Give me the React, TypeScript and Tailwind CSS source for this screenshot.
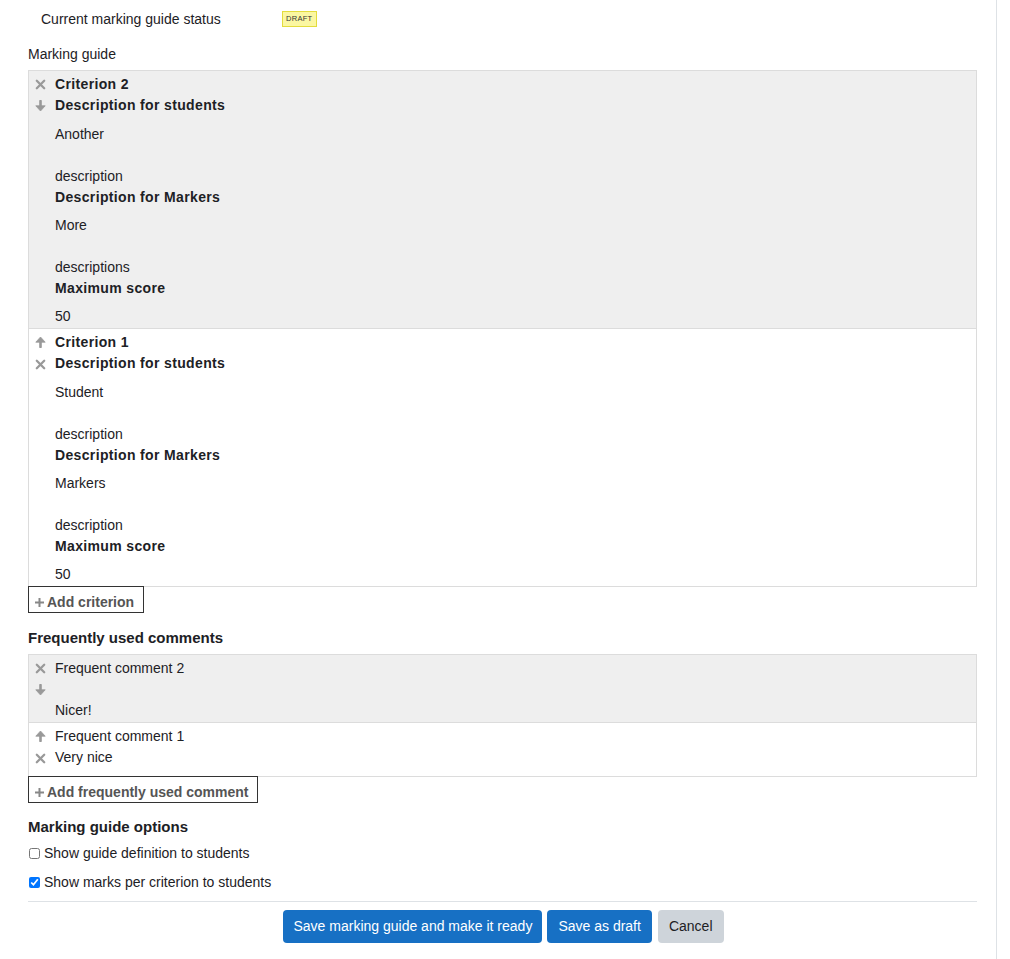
import React from 'react';

type Criterion = {
  title: string;
  students: string;
  markers: string;
  score: string;
  shaded: boolean;
  icons: ('x' | 'up' | 'down')[];
};

type Comment = {
  lines: string[];
  shaded: boolean;
  icons: ('x' | 'up' | 'down')[];
};

const criteria: Criterion[] = [
  { title: 'Criterion 2', students: 'Another\n\ndescription', markers: 'More\n\ndescriptions', score: '50', shaded: true, icons: ['x', 'down'] },
  { title: 'Criterion 1', students: 'Student\n\ndescription', markers: 'Markers\n\ndescription', score: '50', shaded: false, icons: ['up', 'x'] },
];

const comments: Comment[] = [
  { lines: ['Frequent comment 2', '', 'Nicer!'], shaded: true, icons: ['x', 'down'] },
  { lines: ['Frequent comment 1', 'Very nice'], shaded: false, icons: ['up', 'x'] },
];

function Icon({ kind }: { kind: 'x' | 'up' | 'down' }) {
  if (kind === 'x') {
    return (
      <svg width="11" height="11" viewBox="0 0 11 11">
        <path d="M1.8 1.8 L9.2 9.2 M9.2 1.8 L1.8 9.2" stroke="#999" strokeWidth="2.3" strokeLinecap="round" />
      </svg>
    );
  }
  const rot = kind === 'down' ? 'rotate(180 5.5 6)' : undefined;
  return (
    <svg width="11" height="12" viewBox="0 0 11 12">
      <g transform={rot}>
        <path d="M5.5 11 L5.5 4" stroke="#999" strokeWidth="2.6" strokeLinecap="round" />
        <path d="M0.8 6.2 L5.5 1 L10.2 6.2 Z" fill="#999" stroke="#999" strokeWidth="0.8" strokeLinejoin="round" />
      </g>
    </svg>
  );
}

function IconCol({ icons }: { icons: ('x' | 'up' | 'down')[] }) {
  return (
    <div className="w-[26px] shrink-0 flex flex-col items-start pl-[6px] -mt-[1px]">
      {icons.map((k, i) => (
        <div key={i} className="h-[22px] flex items-center">
          <Icon kind={k} />
        </div>
      ))}
    </div>
  );
}

function PlusButton({ label }: { label: string }) {
  return (
    <button className="flex items-center border border-[#333] bg-white h-[27px] pt-[5px] pl-[5px] pr-[9px] text-[14px] leading-[20px] font-bold text-[#555] -mt-px">
      <svg width="11" height="11" viewBox="0 0 11 11" className="mr-[2px]">
        <path d="M5.5 1 L5.5 10 M1 5.5 L10 5.5" stroke="#888" strokeWidth="2" />
      </svg>
      {label}
    </button>
  );
}

const head = 'font-bold tracking-[0.35px]';

export default function App() {
  return (
    <div className="flex bg-white text-[#1d2125] text-[14px] leading-[21px]" style={{ fontFamily: '"Liberation Sans", Arial, sans-serif' }}>
      <div className="w-[997px] min-h-[959px] border-r border-[#dee2e6] pl-[28px] pr-[19px]">
        <div className="flex items-center h-[38px] pl-[13px]">
          <span className="w-[241px]">Current marking guide status</span>
          <span className="bg-[#fbf7a2] border border-[#e3dc3d] text-[7.5px] leading-[14px] px-[3px] tracking-[0.3px] text-[#333]">DRAFT</span>
        </div>
        <div className="h-[32px] flex items-center">Marking guide</div>

        <div className="border border-[#dcdcdc]">
          {criteria.map((c, i) => (
            <div key={i} className={`flex pt-[3px] pb-[1px] ${c.shaded ? 'bg-[#efefef]' : 'bg-white border-t border-[#dcdcdc]'}`}>
              <IconCol icons={c.icons} />
              <div className="flex-1">
                <div className={head}>{c.title}</div>
                <div className={`${head} mb-[8px]`}>Description for students</div>
                <div className="whitespace-pre-wrap">{c.students}</div>
                <div className={`${head} mb-[7px]`}>Description for Markers</div>
                <div className="whitespace-pre-wrap">{c.markers}</div>
                <div className={`${head} mb-[7px]`}>Maximum score</div>
                <div>{c.score}</div>
              </div>
            </div>
          ))}
        </div>
        <PlusButton label="Add criterion" />

        <div className="font-bold text-[15px] mt-[14px] mb-[6px]">Frequently used comments</div>
        <div className="border border-[#dcdcdc]">
          {comments.map((c, i) => (
            <div key={i} className={`flex pt-[3px] ${c.shaded ? 'bg-[#efefef] pb-[1px]' : 'bg-white border-t border-[#dcdcdc] pb-[7px]'}`}>
              <IconCol icons={c.icons} />
              <div className="flex-1">
                {c.lines.map((l, j) => (
                  <div key={j} className={l === '' ? 'h-[21px]' : ''}>{l}</div>
                ))}
              </div>
            </div>
          ))}
        </div>
        <PlusButton label="Add frequently used comment" />

        <div className="font-bold text-[15px] mt-[13px] mb-[4px]">Marking guide options</div>
        <label className="flex items-center h-[24px]">
          <input type="checkbox" className="w-[11px] h-[11px] ml-[1px] mr-[4px]" />
          Show guide definition to students
        </label>
        <label className="flex items-center h-[24px] mt-[5px]">
          <input type="checkbox" defaultChecked className="w-[11px] h-[11px] ml-[1px] mr-[4px]" />
          Show marks per criterion to students
        </label>

        <div className="border-t border-[#dee2e6] mt-[7px] pt-[8px] flex justify-center gap-[5px]">
          <button className="bg-[#1770c4] text-white rounded-[4px] h-[33px] px-[10px] ml-[2px]">Save marking guide and make it ready</button>
          <button className="bg-[#1770c4] text-white rounded-[4px] h-[33px] px-[11px]">Save as draft</button>
          <button className="bg-[#ced4da] text-[#1d2125] rounded-[4px] h-[33px] px-[11px] ml-[1px]">Cancel</button>
        </div>
      </div>
    </div>
  );
}
